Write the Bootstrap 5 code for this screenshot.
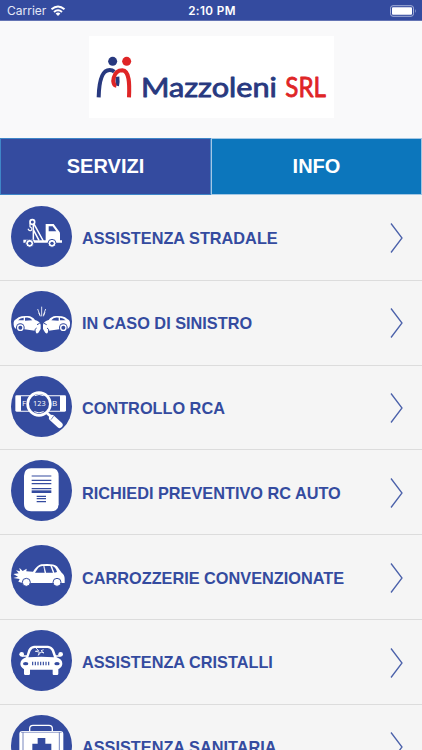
<!DOCTYPE html>
<html lang="it">
<head>
<meta charset="utf-8">
<meta name="viewport" content="width=device-width, initial-scale=1">
<title>Mazzoleni SRL</title>
<link href="https://cdn.jsdelivr.net/npm/bootstrap@5.3.0/dist/css/bootstrap.min.css" rel="stylesheet">
<style>
:root{--brand:#344b9f;--info:#0c76bc}
body{font-family:"Liberation Sans",Arial,sans-serif;background:#f5f5f5;height:750px}
.status{height:21px;background:var(--brand);border-bottom:1px solid #6474b4;font-family:Inter,sans-serif;font-size:12px;color:#fff;line-height:20px;padding:1px 5px 0 7px}
.status .carrier{letter-spacing:0;color:#e4e8f6}
.status .clock{font-weight:600;font-size:11.7px;letter-spacing:.4px}
.brand-bar{height:117px;background:#f9f9fa;padding-top:15px}
.brand-bar svg{width:245px;height:82px}
.tabs{height:57px}
.tab{font-size:20px;font-weight:700;color:#fff;text-decoration:none;border:1px solid #a3c7e4;background:var(--info);padding-bottom:1px}
.tab.on{background:var(--brand);border:1px solid #3f86c8}
.services{padding-top:1px}
.service{height:84.83px;border-bottom:1px solid #dcdcdc;background:#f5f5f5;color:var(--brand);text-decoration:none;padding:0 19px 3px 11px}
.service .disc{width:61px;height:61px}
.service .label{font-size:16.3px;font-weight:700;padding:4px 0 0 10px;white-space:nowrap}
.service .chev{width:13px;height:32px;margin-top:4px}
</style>
<script src="https://cdn.jsdelivr.net/npm/bootstrap@5.3.0/dist/js/bootstrap.bundle.min.js"></script>
</head>
<body class="overflow-hidden d-flex flex-column">
<svg class="d-none"><symbol id="chev" viewBox="0 0 13 32"><path d="M1 1.500 12 16 1 30.500" fill="none" stroke="#4b61aa" stroke-width="1.300"/></symbol></svg>

<header class="status d-flex align-items-center flex-shrink-0">
  <div class="col d-flex align-items-center"><span class="carrier">Carrier</span>
    <svg class="ms-1" width="16" height="12" viewBox="0 0 16 12" fill="none" stroke="#fff" stroke-width="2"><path d="M1.500 4.300Q8-1.400 14.500 4.300M4 7Q8 3.500 12 7"/><path d="M5.600 8.600Q8 6.600 10.400 8.600L8 11Z" fill="#fff" stroke="none"/></svg></div>
  <div class="clock">2:10 PM</div>
  <div class="col d-flex justify-content-end align-items-center">
    <svg width="27" height="12" viewBox="0 0 27 12"><rect x=".5" y=".7" width="23" height="10.600" rx="2.500" fill="none" stroke="#a4afd8"/><rect x="2" y="2.200" width="20" height="7.600" rx="1" fill="#fff"/><path d="M25 4q1.500 2 0 4z" fill="#a4afd8"/></svg></div>
</header>

<div class="brand-bar text-center flex-shrink-0">
  <svg viewBox="14 17 735 246" role="img" aria-label="Mazzoleni SRL">
    <rect x="14" y="17" width="735" height="246" fill="#fff"/>
    <circle cx="85" cy="93" r="13.500" fill="#28397f"/><circle cx="127" cy="93" r="13.500" fill="#df2526"/>
    <g fill="none" stroke-width="12">
      <path d="M43 201C44 155 52 119 76 119Q84 119 90 124M99 139Q101 155 98 166" stroke="#28397f"/>
      <path d="M96 166C79 164 86 120 114 120C136 122 136 160 134 201" stroke="#df2526"/>
    </g>
    <g font-family="Lato, sans-serif" stroke-linejoin="round" stroke-linecap="round" stroke-width="2.500">
      <text x="170" y="199" font-size="80" textLength="408" lengthAdjust="spacingAndGlyphs" fill="#28397f" stroke="#28397f">Mazzoleni</text>
      <text x="603" y="199" font-size="82" textLength="122" lengthAdjust="spacingAndGlyphs" fill="#df2526" stroke="#df2526">SRL</text>
    </g>
  </svg>
</div>

<nav class="tabs d-flex flex-shrink-0">
  <a href="#" class="tab on col d-flex align-items-center justify-content-center">SERVIZI</a>
  <a href="#" class="tab col d-flex align-items-center justify-content-center">INFO</a>
</nav>

<main class="services flex-grow-1 overflow-hidden">
  <a href="#" class="service d-flex align-items-center">
    <svg class="disc flex-shrink-0" viewBox="32 18 183 183"><circle cx="123.500" cy="109.500" r="91.500" fill="#344b9f"/>
      <path d="M69 119H103V121H136V72H160L176 94Q179 96 179 101V121H185V128H69Z" fill="#fff"/><path d="M145 79H157L168 94H145Z" fill="#344b9f"/>
      <path d="M100 70 129 123M99 75V119M99 89 116 121" fill="none" stroke="#fff" stroke-width="4.500"/>
      <circle cx="96" cy="66" r="7" fill="none" stroke="#fff" stroke-width="5"/>
      <path d="M89 70V80Q98 85 93 91Q87 95 83 86" fill="none" stroke="#fff" stroke-width="3.500"/>
      <g fill="#fff" stroke="#344b9f" stroke-width="3"><circle cx="88" cy="130" r="12"/><circle cx="155" cy="130" r="12"/></g><g fill="#344b9f"><circle cx="88" cy="130" r="5"/><circle cx="155" cy="130" r="5"/></g></svg>
    <span class="label">ASSISTENZA STRADALE</span><svg class="chev ms-auto flex-shrink-0"><use href="#chev"/></svg></a>

  <a href="#" class="service d-flex align-items-center">
    <svg class="disc flex-shrink-0" viewBox="32 18 183 183"><circle cx="123.500" cy="109.500" r="91.500" fill="#344b9f"/>
      <g id="crash"><path d="M40 119Q39 106 47 103L55 97Q64 92 83 93Q96 94 104 105Q118 109 121 119L121 132L117 139Q114 147 108 145L104 137 72 133 46 131Q40 127 40 119Z" fill="#fff"/>
      <path d="M53 106Q60 98 70 98V106ZM74 98Q89 95 96 106L74 107Z" fill="#344b9f"/><circle cx="60" cy="128" r="13" fill="#344b9f"/><circle cx="60" cy="128" r="8" fill="none" stroke="#fff" stroke-width="4"/><path d="M104 143Q102 130 109 129M110 119 118 115" fill="none" stroke="#344b9f" stroke-width="3"/></g>
      <use href="#crash" transform="translate(249 0) scale(-1 1)"/>
      <path d="M124 65V94M112 72 119 91M136 72 129 91M115 83 120 94M134 82 129 94" stroke="#fff" stroke-width="2.500"/></svg>
    <span class="label">IN CASO DI SINISTRO</span><svg class="chev ms-auto flex-shrink-0"><use href="#chev"/></svg></a>

  <a href="#" class="service d-flex align-items-center">
    <svg class="disc flex-shrink-0" viewBox="32 18 183 183"><circle cx="123.500" cy="109.500" r="91.500" fill="#344b9f"/>
      <rect x="45" y="76" width="152" height="49" rx="4" fill="#fff"/><path d="M62 79H179V122H62Z" fill="#344b9f"/>
      <g fill="#fff" font-family="Open Sans, sans-serif" font-size="24"><text x="65" y="109">F</text><text x="155" y="109">B</text></g>
      <circle cx="116" cy="102" r="34" fill="#344b9f" stroke="#fff" stroke-width="8"/>
      <path d="M103 77Q116 70 130 77M102 125Q116 132 130 125" stroke="#fff" stroke-width="3" fill="none"/><text x="98" y="109" fill="#fff" font-family="Open Sans, sans-serif" font-size="22" textLength="38">123</text>
      <path d="M139 128 153 141" stroke="#fff" stroke-width="8"/><path d="M155 144 178 165" stroke="#fff" stroke-width="18" stroke-linecap="round"/><path d="M152 149 160 138" stroke="#344b9f" stroke-width="2"/></svg>
    <span class="label">CONTROLLO RCA</span><svg class="chev ms-auto flex-shrink-0"><use href="#chev"/></svg></a>

  <a href="#" class="service d-flex align-items-center">
    <svg class="disc flex-shrink-0" viewBox="32 18 183 183"><circle cx="123.500" cy="109.500" r="91.500" fill="#344b9f"/>
      <path d="M92 43H155Q175 44 175 66V151Q174 171 153 172H93Q71 171 71 149V65Q72 44 92 43Z" fill="#fff"/>
      <path d="M94 66H153M94 79H153M94 89H153M94 104H153M109 127H137M109 134H137M109 143H137" stroke="#344b9f" stroke-width="3.500"/><path d="M94 113H153" stroke="#344b9f" stroke-width="8"/></svg>
    <span class="label">RICHIEDI PREVENTIVO RC AUTO</span><svg class="chev ms-auto flex-shrink-0"><use href="#chev"/></svg></a>

  <a href="#" class="service d-flex align-items-center">
    <svg class="disc flex-shrink-0" viewBox="32 18 183 183"><circle cx="123.500" cy="109.500" r="91.500" fill="#344b9f"/>
      <path d="M39 117 53 113 39 105 55 103 47 94 59 97 57 86 67 96 79 89 78 97 98 98Q111 78 123 76Q157 72 170 82L184 101Q193 107 193 119V132H66L54 128 58 120Z" fill="#fff"/>
      <path d="M104 101 114 86Q120 80 129 81L133 101ZM130 81H150L158 101H137ZM154 81Q166 83 170 99L162 101Z" fill="#344b9f"/>
      <path d="M131 79 136 103M153 80 161 103" stroke="#fff" stroke-width="2"/>
      <g fill="#fff" stroke="#344b9f" stroke-width="3"><circle cx="78" cy="130" r="12"/><circle cx="170" cy="130" r="12"/></g></svg>
    <span class="label">CARROZZERIE CONVENZIONATE</span><svg class="chev ms-auto flex-shrink-0"><use href="#chev"/></svg></a>

  <a href="#" class="service d-flex align-items-center">
    <svg class="disc flex-shrink-0" viewBox="32 18 183 183"><circle cx="123.500" cy="109.500" r="91.500" fill="#344b9f"/>
      <path d="M77 100 84 77Q89 66 101 65H143Q155 66 161 77L169 100Q186 106 186 119Q186 128 174 136V149Q174 153 170 153H160Q157 153 157 149V137H89V149Q89 153 85 153H75Q71 153 71 149V136Q60 128 60 119Q61 106 77 100Z" fill="#fff"/>
      <path d="M84 100 91 80Q95 73 103 72H142Q150 73 154 80L161 100Q123 96 84 100Z" fill="#344b9f"/>
      <ellipse cx="64" cy="91" rx="7" ry="7" fill="#fff"/><ellipse cx="181" cy="91" rx="7" ry="7" fill="#fff"/><path d="M65 96H80M166 96H180" stroke="#fff" stroke-width="4"/>
      <ellipse cx="76" cy="119" rx="8" ry="5" fill="#344b9f"/><ellipse cx="170" cy="119" rx="8" ry="5" fill="#344b9f"/>
      <path d="M97 113V124M105 113V124M113 113V124M121 113V124M129 113V124M137 113V124M145 113V124" stroke="#344b9f" stroke-width="3.500"/>
      <path d="M106 71 115 80 105 82 117 84 114 94 122 84 131 87 122 80 130 77" fill="none" stroke="#fff" stroke-width="2.500"/></svg>
    <span class="label">ASSISTENZA CRISTALLI</span><svg class="chev ms-auto flex-shrink-0"><use href="#chev"/></svg></a>

  <a href="#" class="service d-flex align-items-center">
    <svg class="disc flex-shrink-0" viewBox="32 18 183 183"><circle cx="123.500" cy="109.500" r="91.500" fill="#344b9f"/>
      <path d="M88 68V59Q88 49 98 49H146Q156 49 156 59V68" fill="none" stroke="#fff" stroke-width="4"/>
      <rect x="57" y="66" width="132" height="98" rx="9" fill="#fff"/><path d="M68 70V160M177 70V160" stroke="#344b9f" stroke-width="2"/><path d="M62 70H184" stroke="#344b9f" stroke-width="1.500"/>
      <path d="M112 87H135V104H153V126H135V144H112V126H96V104H112Z" fill="#344b9f"/></svg>
    <span class="label">ASSISTENZA SANITARIA</span><svg class="chev ms-auto flex-shrink-0"><use href="#chev"/></svg></a>
</main>
</body>
</html>
